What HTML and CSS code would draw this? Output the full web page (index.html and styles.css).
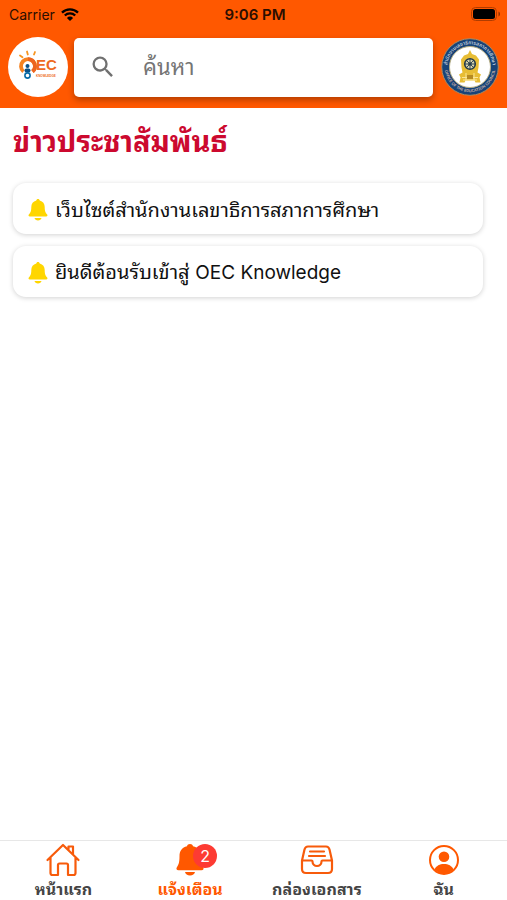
FILE: index.html
```html
<!DOCTYPE html>
<html lang="th">
<head>
<meta charset="utf-8">
<meta name="viewport" content="width=device-width, initial-scale=1">
<title>OEC Knowledge</title>
<link rel="stylesheet" href="styles.css">
</head>
<body>
<header class="header">
  <div class="status">
    <div class="status-left">
      <span>Carrier</span>
      <svg class="wifi" viewBox="0 0 18 13" aria-hidden="true">
        <path d="M1 4.6a11.3 11.3 0 0 1 16 0M3.8 7.5a7.4 7.4 0 0 1 10.4 0" fill="none" stroke="currentColor" stroke-width="2.3"/>
        <path d="M9 13 5.9 9.9a4.4 4.4 0 0 1 6.2 0z" fill="currentColor"/>
      </svg>
    </div>
    <span class="time">9:06 PM</span>
    <svg class="battery" viewBox="0 0 30 14" aria-hidden="true">
      <rect x="0.5" y="0.5" width="25" height="13" rx="4" fill="none" stroke="#b03c00"/>
      <rect x="2" y="2" width="22" height="10" rx="2.5" fill="#000"/>
      <path d="M27.500 4.500c2 .8 2 4.200 0 5z" fill="#8f3000"/>
    </svg>
  </div>
  <div class="tools">
    <svg class="logo" viewBox="0 0 60 60" role="img" aria-label="OEC Knowledge">
      <circle cx="30" cy="30" r="30" fill="#fff"/>
      <g stroke="#f7941d" stroke-width="1.800" stroke-linecap="round">
        <path d="m12 18.500 2.500 1.800M19 14.500l.8 3M26 17.500l1-2.500"/>
      </g>
      <path d="M15.500 34.500a7 7 0 1 1 9 0" fill="none" stroke="#f58220" stroke-width="3.800"/>
      <path d="M20 22.200a7 7 0 0 1 4.500 12.300" fill="none" stroke="#ec6520" stroke-width="3.800"/>
      <circle cx="19.500" cy="29" r="2" fill="#0a5187"/>
      <path d="M18.500 33.500h2" stroke="#0a5187" stroke-width="4" stroke-linecap="round"/>
      <circle cx="19.500" cy="38.500" r="2.600" fill="#fff" stroke="#086ca8" stroke-width="1.600"/>
      <text class="logo-name" x="28" y="33">EC</text>
      <text class="logo-sub" x="28" y="39.500">KNOWLEDGE</text>
    </svg>
    <label class="search">
      <svg class="search-icon" viewBox="0 0 24 24" aria-hidden="true"><path fill="#707070" d="M15.500 14h-.79l-.28-.27A6.470 6.470 0 0 0 16 9.500 6.500 6.500 0 1 0 9.500 16c1.610 0 3.090-.59 4.230-1.570l.27.28v.79l5 4.990L20.490 19l-4.990-5zm-6 0C7.010 14 5 11.990 5 9.500S7.010 5 9.500 5 14 7.010 14 9.500 11.990 14 9.500 14z"/></svg>
      <input class="search-input" type="search" placeholder="ค้นหา" aria-label="ค้นหา">
    </label>
    <svg class="seal" viewBox="0 0 58 58" role="img" aria-label="สำนักงานเลขาธิการสภาการศึกษา">
      <defs>
        <path id="arc-top" d="M6.500 32a22.700 22.700 0 1 1 45 0"/>
        <path id="arc-bottom" d="M3.700 31a25.400 25.400 0 0 0 50.600 0"/>
      </defs>
      <circle cx="29" cy="29" r="28.300" fill="#174378" stroke="#a98b62" stroke-width="1"/>
      <circle cx="29" cy="29" r="20.500" fill="#fff" stroke="#b9af83" stroke-width="1"/>
      <text class="seal-text"><textPath href="#arc-top" startOffset="50%" text-anchor="middle">สำนักงานเลขาธิการสภาการศึกษา</textPath></text>
      <text class="seal-text seal-latin"><textPath href="#arc-bottom" startOffset="50%" text-anchor="middle">OFFICE OF THE EDUCATION COUNCIL</textPath></text>
      <path d="M29 12l2 4 4 1.500 3 4-.5 8-1 5 3.500 2-1.500 3 1 5h-5l-1-2h-9l-1 2h-5l1-5-1.500-3 3.500-2-1-5-.5-8 3-4 4-1.500z" fill="#e7bd35"/>
      <path d="M21 39.500h16M22 42h14M25 35v8M33 35v8" stroke="#fae69a" stroke-width="1"/>
      <path d="M26 37h6v4h-6z" fill="#b58a22"/>
      <circle cx="29" cy="26" r="5.300" fill="#d8d5af" stroke="#263c4c" stroke-width="1.600"/>
      <path d="M29 20.700v10.600M23.700 26h10.600M25.300 22.300l7.400 7.400M32.700 22.300l-7.400 7.400" stroke="#263c4c" stroke-width=".9"/>
      <circle cx="29" cy="26" r="1.800" fill="#263c4c"/>
    </svg>
  </div>
</header>

<main class="main">
  <h1 class="title">ข่าวประชาสัมพันธ์</h1>
  <ul class="news">
    <li><a class="card" href="#news-1">
      <svg class="card-bell" viewBox="0 0 20 22" aria-hidden="true"><path d="M10 0c1 0 1.600.600 1.700 1.500 3.200.800 5 3.200 5 6.500 0 4.500 1 6 2.300 7.300.9.900.5 2.200-.8 2.200H1.800C.5 17.500.1 16.200 1 15.300 2.300 14 3.300 12.500 3.300 8c0-3.300 1.800-5.700 5-6.500C8.400.600 9 0 10 0zM6.500 19h7c-.3 1.500-1.700 2.500-3.500 2.500S6.800 20.500 6.500 19z" fill="#ffd600"/></svg>
      <span>เว็บไซต์สำนักงานเลขาธิการสภาการศึกษา</span>
    </a></li>
    <li><a class="card" href="#news-2">
      <svg class="card-bell" viewBox="0 0 20 22" aria-hidden="true"><path d="M10 0c1 0 1.600.600 1.700 1.500 3.200.800 5 3.200 5 6.500 0 4.500 1 6 2.300 7.300.9.900.5 2.200-.8 2.200H1.800C.5 17.500.1 16.200 1 15.300 2.300 14 3.300 12.500 3.300 8c0-3.300 1.800-5.700 5-6.500C8.400.600 9 0 10 0zM6.500 19h7c-.3 1.500-1.700 2.500-3.500 2.500S6.800 20.500 6.500 19z" fill="#ffd600"/></svg>
      <span>ยินดีต้อนรับเข้าสู่ <span class="latin">OEC Knowledge</span></span>
    </a></li>
  </ul>
</main>

<nav class="tabs">
  <a class="tab" href="#home">
    <span class="tab-icon"><svg viewBox="0 0 34 34" aria-hidden="true"><path d="M1.500 17 17 2l15.500 15M22.500 7V3.500H27V11.500M4.500 14.500V30q0 2 2 2H12V22q0-1.500 1.500-1.500h7q1.500 0 1.500 1.500v10h5.500q2 0 2-2V14.500" fill="none" stroke="#f75b0b" stroke-width="2.200" stroke-linecap="round" stroke-linejoin="round"/></svg></span>
    <span class="tab-label">หน้าแรก</span>
  </a>
  <a class="tab tab-active" href="#notifications">
    <span class="tab-icon"><svg viewBox="0 0 34 34" aria-hidden="true"><path d="M17 1c1.600 0 2.700.900 3 2.300 5 1.200 7.500 4.700 7.500 9.700 0 6.500 1 9 2.500 11 1.200 1.600.5 3.200-1.500 3.200H5.500c-2 0-2.700-1.600-1.500-3.200 1.500-2 2.500-4.500 2.500-11 0-5 2.500-8.500 7.500-9.700.3-1.400 1.400-2.300 3-2.300zM12 29h10c-.5 2.200-2.300 3.500-5 3.500S12.500 31.200 12 29z" fill="#ff5800"/></svg><span class="badge">2</span></span>
    <span class="tab-label">แจ้งเตือน</span>
  </a>
  <a class="tab" href="#documents">
    <span class="tab-icon"><svg viewBox="0 0 34 34" aria-hidden="true"><g fill="none" stroke="#f75b0b" stroke-width="2.200" stroke-linecap="round" stroke-linejoin="round"><path d="M2 17.500 4.500 6.500Q5.300 3.500 8 3.500h18q2.700 0 3.500 3L32 17.500V26q0 4-4 4H6q-4 0-4-4zM2 17.500h9.500q1 0 1 1a4.500 4.500 0 0 0 9 0q0-1 1-1H32"/><path d="M10 8.500h14M9 13h16"/></g></svg></span>
    <span class="tab-label">กล่องเอกสาร</span>
  </a>
  <a class="tab" href="#profile">
    <span class="tab-icon"><svg viewBox="0 0 34 34" aria-hidden="true"><circle cx="17" cy="17" r="14" fill="none" stroke="#ff5800" stroke-width="2"/><circle cx="17" cy="13.800" r="5.300" fill="#ff5800"/><path d="M7.500 26.500C9 22.800 12.800 21 17 21s8 1.800 9.500 5.500A14 14 0 0 1 17 31a14 14 0 0 1-9.500-4.500z" fill="#ff5800"/></svg></span>
    <span class="tab-label">ฉัน</span>
  </a>
</nav>
</body>
</html>
```
FILE: styles.css
```css
* { box-sizing: border-box; }

body {
  margin: 0;
  min-height: 100vh;
  display: flex;
  flex-direction: column;
  background: #fff;
  color: #111;
  font-family: Inter, "Noto Sans Thai Looped", "Noto Looped Thai", Loma, Garuda, Waree, "Noto Sans", sans-serif;
}

a { color: inherit; text-decoration: none; }
svg { display: block; flex: none; overflow: visible; }

.header { background: #ff5800; padding-bottom: 11px; }

.status {
  display: grid;
  grid-template-columns: 1fr auto 1fr;
  align-items: center;
  height: 28px;
  padding: 0 6px 0 9px;
  font-size: 14px;
  color: #2b0e00;
}
.status-left { display: flex; align-items: center; gap: 6px; }
.wifi { width: 18px; height: 13px; color: #000; }
.time { font-size: 15px; font-weight: 600; }
.battery { width: 30px; height: 14px; justify-self: end; }

.tools {
  display: flex;
  align-items: center;
  gap: 8px;
  padding: 9px 8px 0;
}
.logo { width: 60px; height: 60px; }
.logo-name { font: 700 15px "Liberation Sans", sans-serif; fill: #ee6a22; }
.logo-sub { font: 700 3px "Liberation Sans", sans-serif; fill: #ee6a22; }
.search {
  flex: 1;
  min-width: 0;
  height: 59px;
  margin-left: -2px;
  display: flex;
  align-items: center;
  gap: 26px;
  padding: 0 15px;
  background: #fff;
  border-radius: 5px;
  box-shadow: 0 3px 6px rgba(0, 0, 0, 0.3);
}
.search-icon { width: 28px; height: 28px; }
.search-input {
  flex: 1;
  min-width: 0;
  border: 0;
  outline: 0;
  padding: 0;
  background: transparent;
  font: inherit;
  font-size: 22px;
}
.search-input::placeholder { color: #757575; opacity: 1; }
.seal { width: 58px; height: 58px; }
.seal-text { font: 600 5px "Noto Sans Thai", "Noto Sans", sans-serif; fill: #c3d0dd; }
.seal-latin { font-size: 4px; fill: #d2b9ac; }

.main { flex: 1; padding: 12px 24px 12px 13px; }
.title {
  margin: 0 0 19px;
  font-size: 29px;
  line-height: 44px;
  font-weight: 700;
  color: #cc092f;
}
.news {
  list-style: none;
  margin: 0;
  padding: 0;
  display: flex;
  flex-direction: column;
  gap: 12px;
}
.card {
  display: flex;
  align-items: center;
  gap: 7px;
  min-height: 51px;
  padding: 10px 15px 8px;
  border-radius: 13px;
  background: #fff;
  box-shadow: 0 1px 5px rgba(0, 0, 0, 0.18);
  font-size: 20px;
  line-height: 32px;
}
.latin { font-size: 19px; }
.card-bell { width: 20px; height: 22px; }

.tabs {
  display: grid;
  grid-template-columns: repeat(4, 1fr);
  height: 60px;
  padding-top: 2px;
  border-top: 1px solid #e7e7e7;
  background: #fff;
}
.tab {
  display: flex;
  flex-direction: column;
  align-items: center;
  color: #444;
}
.tab-icon { position: relative; width: 34px; height: 34px; }
.tab-label { font-size: 16px; line-height: 24px; font-weight: 700; white-space: nowrap; }
.tab-active { color: #ff5800; }
.badge {
  position: absolute;
  top: 1px;
  left: 20px;
  width: 24px;
  height: 24px;
  border-radius: 50%;
  background: #fd3b33;
  color: #fff;
  font-size: 16px;
  line-height: 24px;
  text-align: center;
}
```
